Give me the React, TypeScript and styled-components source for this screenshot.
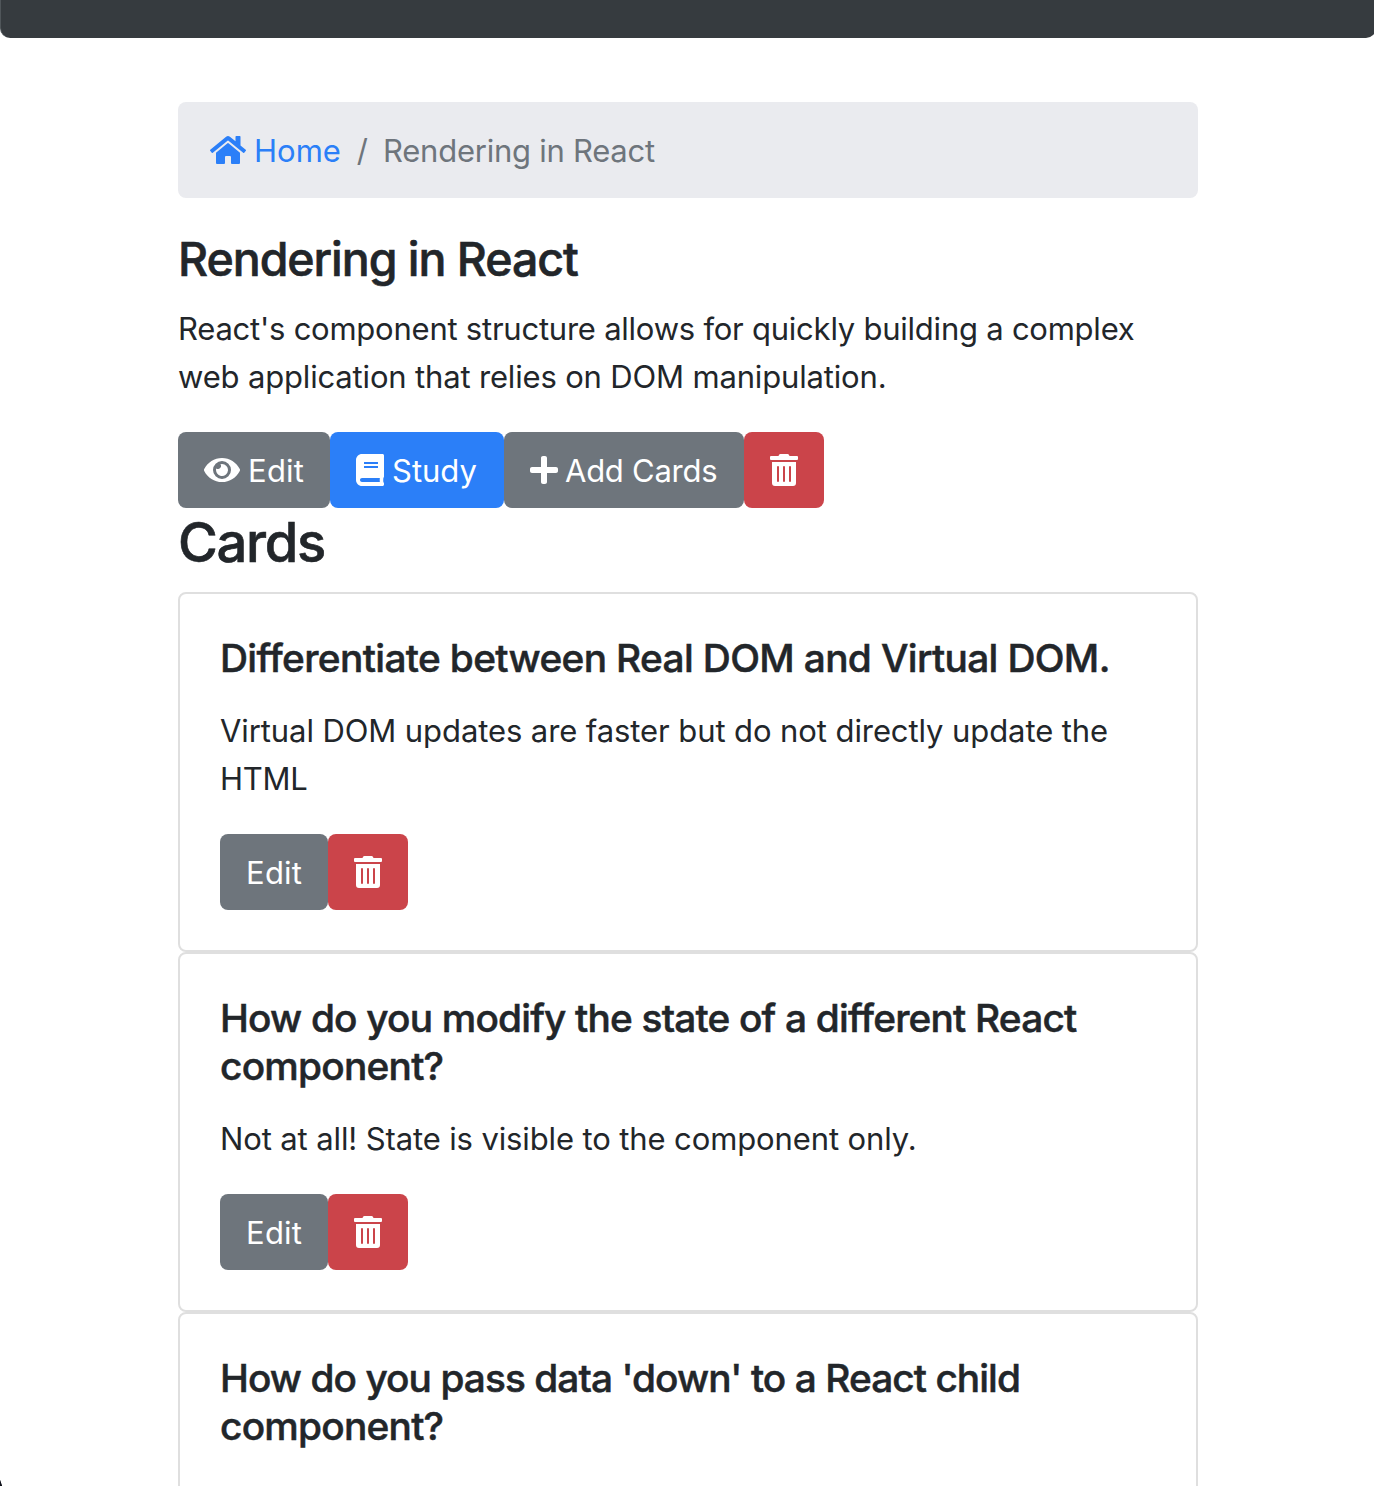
import React from "react";
import styled, { createGlobalStyle } from "styled-components";
import { FaBook, FaEye, FaHome, FaPlus, FaTrashAlt } from "react-icons/fa";

const GlobalStyle = createGlobalStyle`
  *, *::before, *::after { box-sizing: border-box; }
  body {
    margin: 0;
    background: #fff;
    color: #22262a;
    font-family: Inter, "Liberation Sans", sans-serif;
    font-size: 31px;
    line-height: 48px;
    overflow: hidden;
  }
`;

const tones = { secondary: "#6e757c", primary: "#2b7ff8", danger: "#cb444a" };

const Page = styled.div`
  position: relative;
  height: 1486px;
  overflow: hidden;
`;

const TopBar = styled.header`
  width: 1376px;
  height: 38px;
  margin-bottom: 64px;
  background: #363b3f;
  border-left: 1px solid #50565a;
  border-radius: 0 0 10px 10px;
`;

const WindowCorner = styled.div`
  position: absolute;
  left: 0;
  bottom: 0;
  width: 2px;
  height: 6px;
  background: linear-gradient(to top right, #11131c 45%, transparent 65%);
`;

const Container = styled.main`
  width: 1020px;
  margin-left: 178px;
`;

const Breadcrumb = styled.nav`
  display: flex;
  align-items: center;
  height: 96px;
  padding: 0 32px;
  margin-bottom: 32px;
  border-radius: 8px;
  background: #eaebef;
  color: #6e757c;
`;

const HomeLink = styled.a`
  display: flex;
  align-items: center;
  gap: 8px;
  color: #2b7ff8;
  text-decoration: none;
`;

const Text = styled.span<{ $track?: number }>`
  letter-spacing: ${(p) => p.$track ?? 0}px;
  white-space: nowrap;
`;

const Label = styled(Text)`
  padding-top: 2px;
`;

const Slash = styled(Label)`
  padding-left: 16px;
  padding-right: 15px;
`;

const DeckTitle = styled.h3`
  margin: 0 0 17px;
  font-size: 46.5px;
  font-weight: 500;
  -webkit-text-stroke: 0.6px currentColor;
  line-height: 58px;
`;

const SectionTitle = styled.h2`
  margin: 0 0 16px;
  font-size: 54.3px;
  font-weight: 500;
  -webkit-text-stroke: 0.6px currentColor;
  line-height: 68px;
`;

const Paragraph = styled.p`
  margin: 0 0 31px;
  min-height: 48px;
`;

const Line = styled(Text)`
  display: block;
`;

const Buttons = styled.div`
  display: flex;
`;

const Button = styled.button<{ $tone: keyof typeof tones; $width: number; $gap?: number }>`
  display: flex;
  align-items: center;
  gap: ${(p) => p.$gap ?? 8}px;
  width: ${(p) => p.$width}px;
  height: 76px;
  padding: 0 26px;
  border: 0;
  border-radius: 8px;
  background: ${(p) => tones[p.$tone]};
  color: #fff;
  font: inherit;
`;

const Icon = styled.span<{ $width: number }>`
  display: flex;
  flex: none;
  svg {
    width: ${(p) => p.$width}px;
    height: 32px;
  }
`;

const Card = styled.article`
  min-height: 360px;
  padding: 40px;
  border: 2px solid #dfdfdf;
  border-radius: 8px;
`;

const CardTitle = styled.h5`
  margin: 0 0 25px;
  font-size: 38.8px;
  font-weight: 500;
  -webkit-text-stroke: 0.5px currentColor;
  line-height: 48px;
`;

type Run = [text: string, track: number];

const cards: { title: Run[]; body: Run[] }[] = [
  {
    title: [["Differentiate between Real DOM and Virtual DOM.", -0.64]],
    body: [["Virtual DOM updates are faster but do not directly update the", -0.09], ["HTML", -0.25]],
  },
  {
    title: [["How do you modify the state of a different React", -0.81], ["component?", -0.75]],
    body: [["Not at all! State is visible to the component only.", -0.12]],
  },
  {
    title: [["How do you pass data 'down' to a React child", -0.93], ["component?", -0.75]],
    body: [],
  },
];

const Lines = ({ runs }: { runs: Run[] }) => (
  <>
    {runs.map(([text, track]) => (
      <Line key={text} $track={track}>{text}</Line>
    ))}
  </>
);

const DeleteButton = () => (
  <Button $tone="danger" $width={80}><Icon $width={28}><FaTrashAlt /></Icon></Button>
);

export default function App() {
  return (
    <Page>
      <GlobalStyle />
      <TopBar />
      <Container>
        <Breadcrumb>
          <HomeLink href="#">
            <FaHome size="36" />
            <Label>Home</Label>
          </HomeLink>
          <Slash>/</Slash>
          <Label $track={-0.25}>Rendering in React</Label>
        </Breadcrumb>
        <DeckTitle><Text $track={-1.05}>Rendering in React</Text></DeckTitle>
        <Paragraph>
          <Lines
            runs={[
              ["React's component structure allows for quickly building a complex", -0.235],
              ["web application that relies on DOM manipulation.", -0.165],
            ]}
          />
        </Paragraph>
        <Buttons>
          <Button $tone="secondary" $width={152}>
            <Icon $width={36}><FaEye /></Icon><Label $track={0.25}>Edit</Label>
          </Button>
          <Button $tone="primary" $width={174}>
            <Icon $width={28}><FaBook /></Icon><Label>Study</Label>
          </Button>
          <Button $tone="secondary" $width={240} $gap={7}>
            <Icon $width={28}><FaPlus /></Icon><Label $track={-0.25}>Add Cards</Label>
          </Button>
          <DeleteButton />
        </Buttons>
        <SectionTitle><Text $track={-1.3}>Cards</Text></SectionTitle>
        {cards.map((card) => (
          <Card key={card.title[0][0]}>
            <CardTitle><Lines runs={card.title} /></CardTitle>
            {card.body.length > 0 && (
              <>
                <Paragraph><Lines runs={card.body} /></Paragraph>
                <Buttons>
                  <Button $tone="secondary" $width={108}><Label $track={0.25}>Edit</Label></Button>
                  <DeleteButton />
                </Buttons>
              </>
            )}
          </Card>
        ))}
      </Container>
      <WindowCorner />
    </Page>
  );
}
